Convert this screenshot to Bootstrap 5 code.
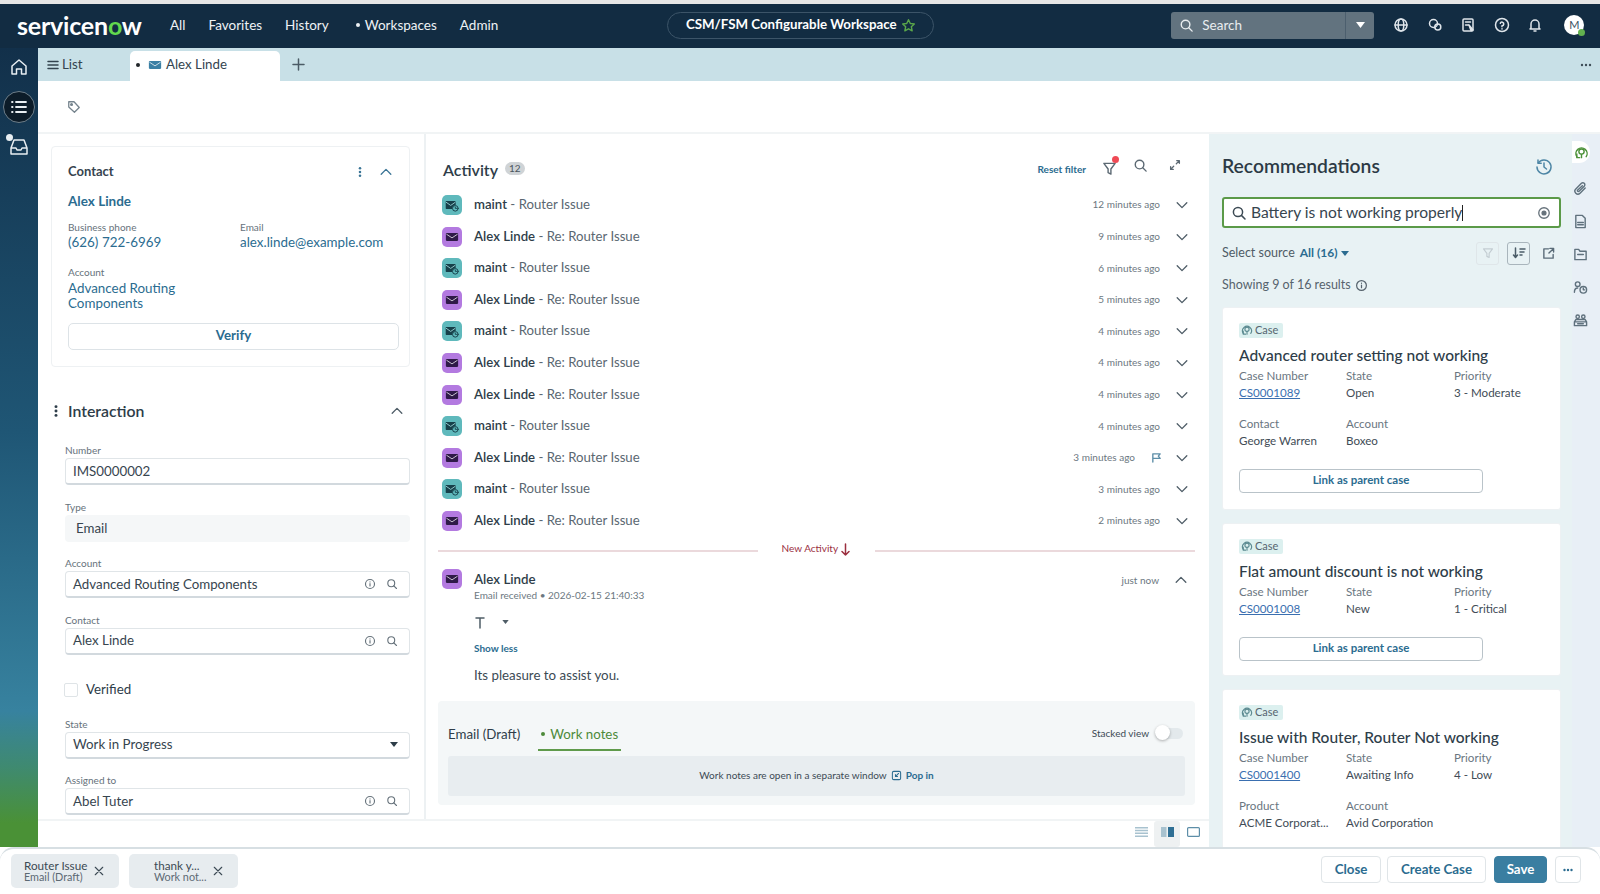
<!DOCTYPE html>
<html lang="en">
<head>
  <meta charset="UTF-8">
  <title>CSM/FSM Configurable Workspace</title>
  <link href="https://cdn.jsdelivr.net/npm/bootstrap@5.3.3/dist/css/bootstrap.min.css" rel="stylesheet">
  <style>
    html, body { height: 894px; overflow: hidden; }
    body { font-family: Lato, "Liberation Sans", sans-serif; font-size: 13.3px; color: #2e3d49; background: #fff; padding-top: 4px; border-top: 0; }
    .ic { fill: none; stroke: currentColor; stroke-width: 1.5; stroke-linecap: round; stroke-linejoin: round; flex: none; }
    .ic-fill { fill: currentColor; stroke: none; }
    a { color: #2b6c90; text-decoration: none; }

    /* top bar */
    .sn-strip { position: absolute; top: 0; left: 0; right: 0; height: 4px; background: #e6e6e6; }
    .sn-top { height: 44px; background: #122c42; color: #fff; padding-bottom: 2px; }
    .sn-logo { width: 124px; margin-left: 17px; font-size: 25px; font-weight: 700; line-height: 1; letter-spacing: -.2px; }
    .sn-logo span { color: #62d84e; }
    .sn-menu { margin-left: 29px; gap: 23px; font-size: 13.5px; color: #eef2f5; }
    .sn-dot { display: inline-block; width: 4px; height: 4px; border-radius: 50%; background: currentColor; margin-right: 5px; vertical-align: 3px; }
    .sn-ws { margin-left: 169px; width: 267px; height: 27px; border: 1px solid #3c5468; border-radius: 14px; font-size: 13.3px; font-weight: 700; }
    .sn-search { margin-left: 237px; width: 203px; height: 27px; background: #62737f; border-radius: 3px; font-size: 13.5px; color: #e9edf0; }
    .sn-search-drop { width: 29px; height: 27px; border-left: 1px solid #4c5f6e; }
    .sn-tools { margin-left: 19px; gap: 17.5px; color: #dfe5ea; }
    .sn-avatar { width: 20px; height: 20px; border-radius: 50%; background: #fff; color: #39505f; font-size: 11px; position: relative; margin-left: 21px; }
    .sn-avatar i { position: absolute; right: -1px; bottom: -1px; width: 7px; height: 7px; border-radius: 50%; background: #62b14f; }

    /* frame */
    .sn-body { height: 799px; }
    .sn-side { width: 38px; background: linear-gradient(180deg, #12304a 0%, #1f5675 48%, #37829f 83%, #3f8a70 90%, #4a9136 97%); color: #e8eef2; padding-top: 3px; gap: 8px; }
    .sn-side-btn { width: 32px; height: 32px; border-radius: 50%; }
    .sn-side-on { background: #0c1c29; border: 1px solid #6d7e8a; }
    .sn-inbox { position: relative; }
    .sn-inbox i { position: absolute; left: 3px; top: 3px; width: 7px; height: 7px; border-radius: 50%; background: #e8eef2; }
    .sn-tabs { height: 33px; background: #c8e0e7; }
    .sn-tab-list { width: 92px; padding-left: 9px; gap: 3px; color: #34444f; }
    .sn-tab-on { width: 150px; height: 30px; margin-top: 3px; padding: 0 0 3px 6px; background: #fff; border-radius: 5px 5px 0 0; gap: 4px; color: #34444f; }
    .sn-tagrow { height: 55px; padding-left: 29px; border-bottom: 2px solid #f1f4f5; color: #76848e; }

    /* left column */
    .sn-left { width: 388px; border-right: 2px solid #edf1f3; overflow: hidden; flex: none; }
    .sn-contact { margin: 12px 14px 0 13px; height: 221px; border: 1px solid #eef1f3; border-radius: 4px; padding: 15px 10px 0 16px; }
    .sn-contact-head { margin-right: 6px; }
    .sn-cardtitle { font-size: 13px; font-weight: 700; color: #36444f; }
    .sn-alex { font-size: 13.5px; font-weight: 700; margin-top: 9px; line-height: 20px; }
    .sn-contact-cols { margin-top: 10px; }
    .sn-lab { font-size: 10px; color: #66727b; line-height: 13px; }
    .sn-link-big { display: block; font-size: 13.4px; line-height: 17px; color: #2b6c90; }
    .sn-acct-lab { margin-top: 15px; }
    .sn-acct { width: 130px; line-height: 15.5px; margin-top: 2px; }
    .sn-verify { height: 27px; margin-top: 11px; font-size: 13.3px; font-weight: 700; color: #2b6c90; border: 1px solid #dde3e7; border-radius: 5px; }
    .sn-inter-head { margin: 33px 20px 0 14px; height: 22px; font-size: 15.8px; font-weight: 600; color: #2e3d49; }
    .sn-form { margin: 22px 14px 0 27px; }
    .sn-fld { margin-bottom: 15.5px; }
    .sn-fld .sn-lab { margin-bottom: 1px; }
    .sn-input { height: 27px; padding: 0 11px 0 7px; font-size: 13.3px; line-height: 25px; color: #37454f; border: 1px solid #e0e5e8; border-bottom: 2px solid #d2d9de; border-radius: 4px; }
    .sn-input-ro { background: #f5f7f8; border: 0; padding-left: 11px; line-height: 27px; }
    .sn-check { width: 14px; height: 14px; border: 1px solid #dfe4e7; border-radius: 2px; }
    .sn-verified { height: 24px; margin: 23px 0 16px -1px; }

    /* activity */
    .sn-mid { width: 783px; padding: 0 14px 0 12px; flex: none; overflow: hidden; }
    .sn-mid-head { height: 55px; padding: 24px 13px 0 5px; }
    .sn-act-title { font-size: 16px; font-weight: 600; color: #2e3d49; }
    .sn-count { background: #cfd3d6; color: #4b565e; font-size: 10px; line-height: 13px; border-radius: 7px; padding: 0 4px; margin-left: 7px; }
    .sn-row { height: 31.6px; font-size: 13.2px; }
    .sn-ava { width: 20px; height: 20px; border-radius: 5px; margin-left: 4px; margin-right: 12px; }
    .sn-ava-a { background: #5fb9bc; color: #16404a; }
    .sn-ava-b { background: #b37ae0; color: #2f1a48; }
    .sn-who { font-weight: 600; color: #2e3d49; }
    .sn-subj { color: #5a6771; }
    .sn-time { font-size: 10px; color: #6c7881; }
    .sn-chev { margin-left: 15px; margin-right: 6px; color: #4f5d67; }
    .sn-newline { height: 23px; color: #9b2f3f; font-size: 10px; }
    .sn-newline hr { flex: 1; margin: 6px 0 0; border: 0; border-top: 2px solid #ebd9dc; opacity: 1; }
    .sn-new-text { width: 117px; }
    .sn-msg { padding: 9px 7px 0 0; height: 141px; }
    .sn-msg-name { line-height: 1; padding-top: 4px; }
    .sn-msg-sub { margin-top: 2px; }
    .sn-msg-t { margin-top: 11px; height: 16px; }
    .sn-showless { display: block; font-size: 10px; font-weight: 700; margin-top: 11px; }
    .sn-msg-body { margin-top: 10px; color: #3c4a54; }
    .sn-composer { height: 104px; background: #f4f7f8; border-radius: 4px; padding: 0 10px; }
    .sn-comp-tabs { height: 53px; padding-top: 21px; }
    .sn-comp-tab { height: 29px; line-height: 24px; }
    .sn-comp-on { margin-left: 18px; width: 83px; color: #4c8a3a; border-bottom: 2px solid #5f9a4b; text-align: center; }
    .sn-switch { width: 28px; height: 11px; border-radius: 6px; background: #e3e9ec; position: relative; margin-left: 6px; margin-right: 2px; }
    .sn-switch i { position: absolute; left: 0; top: -3px; width: 15px; height: 15px; border-radius: 50%; background: #fff; box-shadow: 0 1px 3px rgba(0,0,0,.3); }
    .sn-stacked { height: 24px; color: #3c4a54; }
    .sn-popped { height: 40px; margin-top: 2px; background: #e8edf0; border-radius: 3px; font-size: 10px; color: #3c4a54; gap: 4px; }
    .sn-foot { height: 28px; border-top: 2px solid #f1f4f5; padding-right: 3px; color: #5d8ea8; }
    .sn-foot span { width: 26px; height: 26px; padding-bottom: 4px; }
    .sn-foot-on { background: #eef1f2; border-radius: 3px; }

    /* recommendations */
    .sn-rec { width: 363px; background: #e8f2f4; padding: 0 11px 0 13px; overflow: hidden; flex: none; }
    .sn-rec-title { height: 63px; padding-top: 18px; font-size: 19.3px; font-weight: 600; color: #2c3a45; }
    .sn-hist { margin-top: 6px; margin-right: 8px; color: #4d86a5; }
    .sn-rec-search { height: 31px; background: #fff; border: 2px solid #5b9a48; border-radius: 3px; font-size: 15.6px; color: #37454f; padding: 0 8px 0 7px; gap: 4px; }
    .sn-caret { display: inline-block; width: 1px; height: 16px; background: #222; vertical-align: -3px; }
    .sn-src { height: 38px; font-size: 12.5px; color: #4f5c66; margin-top: 6px; }
    .sn-tool { width: 23px; height: 23px; border: 1px solid #dfe6e9; border-radius: 3px; color: #c3cdd2; }
    .sn-tool-on { border: 1.5px solid #a9b5bc; color: #4b5d68; margin-left: 8px; margin-right: 12px; }
    .sn-export { margin-right: 6px; color: #5a6c78; }
    .sn-showing { font-size: 12.5px; color: #56636d; height: 26px; gap: 4px; margin-bottom: 9px; }
    .sn-rcard { background: #fff; border: 1px solid #edf1f3; border-radius: 3px; padding: 10.5px 16px 0; margin-bottom: 13px; }
    .sn-casetag { width: 44px; height: 15px; background: #dcf0ef; color: #566570; font-size: 11px; border-radius: 2px; gap: 2px; padding-left: 2px; }
    .sn-rtitle { font-size: 15.5px; line-height: 20px; font-weight: 500; color: #2e3d49; margin-top: 7.5px; }
    .sn-grid { display: grid; grid-template-columns: 107px 108px 1fr; font-size: 11.6px; line-height: 17px; color: #3f4c56; margin-top: 2px; }
    .sn-grid small { display: block; font-size: 11.6px; color: #6a767f; }
    .sn-grid a { color: #3a6fb0; text-decoration: underline; }
    .sn-gap { margin-top: 14px; }
    .sn-linkbtn { width: 244px; height: 24px; margin-top: 19.5px; line-height: 20px; border: 1.5px solid #b9c3c9; border-radius: 4px; font-size: 11.5px; font-weight: 700; color: #2b6c90; text-align: center; }
    .sn-rail { width: 28px; background: #e8eff6; padding: 7px 0 0 0; gap: 15px; color: #5f717d; flex: none; }
    .sn-rail-on { width: 18px; height: 22px; border-radius: 0 11px 11px 0; background: #fff; color: #4b9138; }
    .sn-rail-item { height: 18px; padding-left: 1px; }

    /* bottom bar */
    .sn-bottom { height: 47px; border-top: 2px solid #d7dfe3; border-radius: 14px 14px 0 0; padding: 5px 19px 0 11px; }
    .sn-pill { height: 34px; background: #e7ecef; border-radius: 5px; line-height: 12px; font-size: 11.7px; color: #3c4a54; padding: 0 14px 0 13px; gap: 6px; white-space: nowrap; }
    .sn-pill small { display: block; font-size: 10.8px; color: #5c6973; }
    .sn-pill-b { width: 109px; margin-left: 10px; padding-left: 15px; }
    .sn-bbtn { height: 27px; margin-top: 2px; font-size: 13.3px; font-weight: 700; line-height: 25px; color: #2b6c90; border: 1px solid #e0e5e8; border-radius: 4px; background: #fff; text-align: center; }
    .sn-bsave { background: #3a7ea1; color: #fff; border-color: #3a7ea1; }
  </style>
</head>
<body>
<div class="sn-strip"></div>

<svg width="0" height="0" class="position-absolute">
  <symbol id="i-search" viewBox="0 0 16 16"><circle cx="7" cy="7" r="4.6"/><path d="M10.4 10.4 14 14"/></symbol>
  <symbol id="i-info" viewBox="0 0 16 16"><circle cx="8" cy="8" r="6"/><path d="M8 7.5v3.2M8 5.2v.1"/></symbol>
  <symbol id="i-down" viewBox="0 0 16 16"><path d="M2.5 5.5 8 11l5.5-5.5"/></symbol>
  <symbol id="i-up" viewBox="0 0 16 16"><path d="M2.5 10.5 8 5l5.5 5.5"/></symbol>
  <symbol id="i-x" viewBox="0 0 16 16"><path d="M3 3l10 10M13 3 3 13"/></symbol>
  <symbol id="i-mail" viewBox="0 0 16 16"><path d="M2 3.5h12c.5 0 1 .5 1 1v7c0 .5-.5 1-1 1H2c-.5 0-1-.5-1-1v-7c0-.5.5-1 1-1z" fill="currentColor" stroke="none"/><path d="M2 5l6 4 6-4" stroke="#fff" stroke-width="1.1" opacity=".75"/></symbol>
  <symbol id="i-mailclock" viewBox="0 0 16 16"><path d="M1.500 3.500h10c.4 0 .7.3.7.7V8a4 4 0 0 0-4 4.500H1.500c-.4 0-.7-.3-.7-.7V4.200c0-.4.3-.7.700-.7z" fill="currentColor" stroke="none"/><path d="M1.500 5l5 3.500 5-3.500" stroke="#9fd8da" stroke-width="1"/><circle cx="11.800" cy="11.800" r="3.200" stroke-width="1.100"/><path d="M11.800 10.200v1.700h1.400" stroke-width="1"/></symbol>
  <symbol id="i-filter" viewBox="0 0 16 16"><path d="M2 2.500h12L9.500 8.500V14l-3-1.500v-4z"/></symbol>
  <symbol id="i-dots" viewBox="0 0 16 16"><circle cx="8" cy="3" r="1.700" fill="currentColor" stroke="none"/><circle cx="8" cy="8" r="1.700" fill="currentColor" stroke="none"/><circle cx="8" cy="13" r="1.700" fill="currentColor" stroke="none"/></symbol>
  <symbol id="i-case" viewBox="0 0 16 16"><path d="M3 12.500A6 6 0 1 1 13 12.500"/><circle cx="8" cy="7" r="2.800"/><path d="M3 9.500v4h3M8 10v3.500"/></symbol>
</svg>

<!-- top bar -->
<div class="sn-top d-flex align-items-center">
  <div class="sn-logo">servicen<span>o</span>w</div>
  <div class="sn-menu d-flex">
    <span>All</span><span>Favorites</span><span>History</span>
    <span class="ms-1"><i class="sn-dot"></i>Workspaces</span><span>Admin</span>
  </div>
  <div class="sn-ws d-flex align-items-center justify-content-center gap-1">
    CSM/FSM Configurable Workspace
    <svg class="ic" width="15" height="15" viewBox="0 0 16 16" style="color:#5aa64a"><path d="M8 1.800l1.900 4 4.300.5-3.200 3 .9 4.400L8 11.500l-3.900 2.200.9-4.400-3.200-3 4.300-.5z"/></svg>
  </div>
  <div class="sn-search d-flex align-items-center">
    <svg class="ic ms-2 me-1" width="15" height="15"><use href="#i-search"/></svg>
    <span class="flex-grow-1 ms-1">Search</span>
    <span class="sn-search-drop d-flex align-items-center justify-content-center"><svg width="9" height="6" viewBox="0 0 9 6"><path d="M0 0h9L4.500 6z" fill="#fff"/></svg></span>
  </div>
  <div class="sn-tools d-flex align-items-center">
    <svg class="ic" width="16" height="16" viewBox="0 0 16 16" stroke-width="1.100"><circle cx="8" cy="8" r="6"/><ellipse cx="8" cy="8" rx="2.800" ry="6"/><path d="M2 8h12"/></svg>
    <svg class="ic" width="16" height="16" viewBox="0 0 16 16"><circle cx="6.500" cy="6.500" r="4"/><circle cx="10.800" cy="10" r="3"/></svg>
    <svg class="ic" width="16" height="16" viewBox="0 0 16 16"><rect x="3" y="2" width="10" height="12" rx="1"/><path d="M5.500 5h5M5.500 8h3"/><path d="M9 8l4 5-2 .5z" fill="currentColor"/></svg>
    <svg class="ic" width="16" height="16" viewBox="0 0 16 16"><circle cx="8" cy="8" r="6.500"/><path d="M6.300 6.300A1.800 1.800 0 1 1 8 8.700v1M8 11.800v.1"/></svg>
    <svg class="ic" width="16" height="16" viewBox="0 0 16 16"><path d="M4 11V7a4 4 0 0 1 8 0v4l1 1H3zM7 14h2"/></svg>
  </div>
  <div class="sn-avatar d-flex align-items-center justify-content-center">M<i></i></div>
</div>

<div class="sn-body d-flex">
  <!-- left nav -->
  <div class="sn-side d-flex flex-column align-items-center">
    <span class="sn-side-btn d-flex align-items-center justify-content-center">
      <svg class="ic" width="20" height="20" viewBox="0 0 20 20"><path d="M3 9l7-6 7 6v8h-4.500v-5h-5v5H3z"/></svg>
    </span>
    <span class="sn-side-btn sn-side-on d-flex align-items-center justify-content-center">
      <svg class="ic" width="18" height="18" viewBox="0 0 18 18"><path d="M6 4h10M6 9h10M6 14h10M2 4h.6M2 9h.6M2 14h.6" stroke-width="1.800"/></svg>
    </span>
    <span class="sn-side-btn sn-inbox d-flex align-items-center justify-content-center">
      <i></i>
      <svg class="ic" width="20" height="20" viewBox="0 0 20 20"><path d="M5 3h10l3 8v6H2v-6zM2 11h5l1 2h4l1-2h5"/></svg>
    </span>
  </div>

  <div class="flex-grow-1 d-flex flex-column" style="min-width:0">
    <!-- tabs -->
    <div class="sn-tabs d-flex">
      <div class="sn-tab-list d-flex align-items-center">
        <svg class="ic" width="12" height="12" viewBox="0 0 12 12" stroke-width="1"><path d="M1 2.500h10M1 6h10M1 9.500h10"/></svg>List
      </div>
      <div class="sn-tab-on d-flex align-items-center">
        <i class="sn-dot m-0 me-1 text-dark" style="vertical-align:0"></i>
        <svg class="ic" width="14" height="14" style="color:#3b80a5"><use href="#i-mail"/></svg>Alex Linde
      </div>
      <div class="d-flex align-items-center ms-2 ps-1" style="color:#4b5b66">
        <svg class="ic" width="13" height="13" viewBox="0 0 13 13" stroke-width="1.200"><path d="M6.500 1v11M1 6.500h11"/></svg>
      </div>
      <div class="ms-auto d-flex align-items-center pe-2" style="color:#3e4d58">
        <svg width="12" height="4" viewBox="0 0 12 4"><circle cx="2" cy="2" r="1.200" fill="currentColor"/><circle cx="6" cy="2" r="1.200" fill="currentColor"/><circle cx="10" cy="2" r="1.200" fill="currentColor"/></svg>
      </div>
    </div>
    <!-- tags -->
    <div class="sn-tagrow d-flex align-items-center">
      <svg class="ic" width="14" height="14" viewBox="0 0 16 16"><path d="M2 2h6l6 6.500-5.500 5.500L2 8z"/><circle cx="5.200" cy="5.200" r="1" fill="currentColor"/></svg>
    </div>

    <div class="flex-grow-1 d-flex" style="min-height:0">
      <div class="d-flex flex-column" style="width:1171px">
        <div class="flex-grow-1 d-flex" style="min-height:0">
          <!-- form column -->
          <div class="sn-left">
            <div class="sn-contact">
              <div class="sn-contact-head d-flex align-items-center">
                <span class="sn-cardtitle flex-grow-1">Contact</span>
                <svg class="ic" width="12" height="12" style="color:#3b7596"><use href="#i-dots"/></svg>
                <svg class="ic" width="14" height="14" style="color:#3b7596;margin-left:13px"><use href="#i-up"/></svg>
              </div>
              <a href="#" class="d-block sn-alex">Alex Linde</a>
              <div class="sn-contact-cols d-flex">
                <div style="width:172px"><div class="sn-lab">Business phone</div><a href="#" class="sn-link-big">(626) 722-6969</a></div>
                <div><div class="sn-lab">Email</div><a href="#" class="sn-link-big">alex.linde@example.com</a></div>
              </div>
              <div class="sn-lab sn-acct-lab">Account</div>
              <a href="#" class="sn-link-big sn-acct">Advanced Routing Components</a>
              <div class="sn-verify d-flex align-items-center justify-content-center">Verify</div>
            </div>

            <div class="sn-inter-head d-flex align-items-center">
              <svg class="ic" width="8" height="14" viewBox="4 0 8 16" style="color:#2e3d49"><use href="#i-dots" width="16" height="16" x="0"/></svg>
              <span class="flex-grow-1" style="margin-left:8px">Interaction</span>
              <svg class="ic" width="14" height="14" style="color:#4f5d67"><use href="#i-up"/></svg>
            </div>

            <div class="sn-form">
              <div class="sn-fld"><div class="sn-lab">Number</div><div class="sn-input">IMS0000002</div></div>
              <div class="sn-fld"><div class="sn-lab">Type</div><div class="sn-input sn-input-ro">Email</div></div>
              <div class="sn-fld"><div class="sn-lab">Account</div><div class="sn-input d-flex align-items-center"><span class="flex-grow-1">Advanced Routing Components</span><svg class="ic me-2" width="12" height="12" viewBox="0 0 16 16" style="color:#66727b"><use href="#i-info"/></svg><svg class="ic" width="12" height="12" viewBox="0 0 16 16" style="color:#66727b;margin-left:2px"><use href="#i-search"/></svg></div></div>
              <div class="sn-fld"><div class="sn-lab">Contact</div><div class="sn-input d-flex align-items-center"><span class="flex-grow-1">Alex Linde</span><svg class="ic me-2" width="12" height="12" viewBox="0 0 16 16" style="color:#66727b"><use href="#i-info"/></svg><svg class="ic" width="12" height="12" viewBox="0 0 16 16" style="color:#66727b;margin-left:2px"><use href="#i-search"/></svg></div></div>
              <div class="sn-verified d-flex align-items-center gap-2"><span class="sn-check"></span><span>Verified</span></div>
              <div class="sn-fld"><div class="sn-lab">State</div><div class="sn-input d-flex align-items-center"><span class="flex-grow-1">Work in Progress</span><svg width="8" height="5" viewBox="0 0 8 5"><path d="M0 0h8L4 5z" fill="#2e3d49"/></svg></div></div>
              <div class="sn-fld"><div class="sn-lab">Assigned to</div><div class="sn-input d-flex align-items-center"><span class="flex-grow-1">Abel Tuter</span><svg class="ic me-2" width="12" height="12" viewBox="0 0 16 16" style="color:#66727b"><use href="#i-info"/></svg><svg class="ic" width="12" height="12" viewBox="0 0 16 16" style="color:#66727b;margin-left:2px"><use href="#i-search"/></svg></div></div>
            </div>
          </div>

          <!-- activity column -->
          <div class="sn-mid">
            <div class="sn-mid-head d-flex align-items-start">
              <span class="sn-act-title">Activity</span><span class="sn-count mt-1">12</span>
              <a href="#" class="ms-auto fw-bold mt-1" style="font-size:10px">Reset filter</a>
              <span class="position-relative ms-3" style="color:#5c6973">
                <svg class="ic" width="15" height="15"><use href="#i-filter"/></svg>
                <i class="position-absolute rounded-circle" style="left:10px;top:-2px;width:7px;height:7px;background:#ef4a55"></i>
              </span>
              <svg class="ic ms-3" width="15" height="15" style="color:#5c6973"><use href="#i-search"/></svg>
              <svg class="ic ms-3 ps-1" width="18" height="14" viewBox="0 0 16 16" style="color:#5c6973"><path d="M3 13l3.500-3.500M3 13h3M3 13v-3M13 3 9.500 6.500M13 3h-3M13 3v3"/></svg>
            </div>

            <div id="activityRows"></div>

            <div class="sn-newline d-flex align-items-center text-center">
              <hr><span class="sn-new-text">New Activity <svg class="ic" width="11" height="13" viewBox="0 0 11 13"><path d="M5.500 1v11M2 8.500l3.500 3.500L9 8.500"/></svg></span><hr>
            </div>

            <div class="sn-msg d-flex">
              <span class="sn-ava sn-ava-b d-flex align-items-center justify-content-center"><svg class="ic" width="14" height="14"><use href="#i-mail"/></svg></span>
              <div class="flex-grow-1">
                <div class="sn-who sn-msg-name">Alex Linde</div>
                <div class="sn-time sn-msg-sub">Email received &bull; 2026-02-15 21:40:33</div>
                <div class="sn-msg-t d-flex align-items-center">
                  <svg class="ic" width="12" height="13" viewBox="0 0 12 13" stroke-width="1.100" style="color:#4f5d67"><path d="M2 2h8M6 2v10"/></svg>
                  <svg class="ms-3" width="7" height="4" viewBox="0 0 8 5"><path d="M0 0h8L4 5z" fill="#4f5d67"/></svg>
                </div>
                <a href="#" class="sn-showless">Show less</a>
                <div class="sn-msg-body">Its pleasure to assist you.</div>
              </div>
              <div class="d-flex align-items-start pt-1">
                <span class="sn-time">just now</span>
                <svg class="ic sn-chev me-0" width="14" height="14"><use href="#i-up"/></svg>
              </div>
            </div>

            <div class="sn-composer">
              <div class="sn-comp-tabs d-flex align-items-start">
                <span class="sn-comp-tab">Email (Draft)</span>
                <span class="sn-comp-tab sn-comp-on"><i class="sn-dot"></i>Work notes</span>
                <span class="sn-stacked ms-auto d-flex align-items-center sn-time">Stacked view<span class="sn-switch"><i></i></span></span>
              </div>
              <div class="sn-popped d-flex align-items-center justify-content-center">
                Work notes are open in a separate window
                <svg class="ic" width="11" height="11" viewBox="0 0 16 16" style="color:#2b6c90"><rect x="2" y="2" width="12" height="12" rx="2"/><path d="M11 5 6.500 9.500M6.500 6.500v3h3"/></svg>
                <a href="#" class="fw-bold">Pop in</a>
              </div>
            </div>
          </div>
        </div>
        <!-- view switcher -->
        <div class="sn-foot d-flex justify-content-end">
          <span class="d-flex align-items-center justify-content-center"><svg width="13" height="10" viewBox="0 0 13 10" fill="#a8c2cf"><path d="M0 0h13v1.500H0zM0 2.800h13v1.500H0zM0 5.600h13v1.500H0zM0 8.400h13V10H0z"/></svg></span>
          <span class="sn-foot-on d-flex align-items-center justify-content-center"><svg width="13" height="10" viewBox="0 0 13 10"><path d="M0 0h5.500v10H0z" fill="#a8c2cf"/><path d="M7 0h6v10H7z" fill="#2f6f94"/></svg></span>
          <span class="d-flex align-items-center justify-content-center"><svg width="13" height="10" viewBox="0 0 13 10"><rect x=".6" y=".6" width="11.800" height="8.800" rx="1" fill="none" stroke="#5d8ea8" stroke-width="1.200"/></svg></span>
        </div>
      </div>

      <!-- recommendations -->
      <div class="sn-rec">
        <div class="sn-rec-title d-flex justify-content-between align-items-start">
          Recommendations
          <svg class="ic sn-hist" width="18" height="18" viewBox="0 0 18 18"><path d="M3.200 5A7 7 0 1 1 2 9"/><path d="M3 2v3.200h3.200M9 5v4l2.500 2"/></svg>
        </div>
        <div class="sn-rec-search d-flex align-items-center">
          <svg class="ic" width="16" height="16" style="color:#3c4a54"><use href="#i-search"/></svg>
          <span class="flex-grow-1">Battery is not working properly<i class="sn-caret"></i></span>
          <svg class="ic" width="14" height="14" viewBox="0 0 16 16" style="color:#66727b"><circle cx="8" cy="8" r="6"/><circle cx="8" cy="8" r="2.200" fill="currentColor"/></svg>
        </div>
        <div class="sn-src d-flex align-items-center">
          <span>Select source</span>
          <a href="#" class="fw-bold" style="font-size:12px;margin-left:5px">All (16)</a>
          <svg class="ms-1" width="8" height="5" viewBox="0 0 8 5"><path d="M0 0h8L4 5z" fill="#2b6c90"/></svg>
          <span class="sn-tool ms-auto d-flex align-items-center justify-content-center"><svg class="ic" width="12" height="12"><use href="#i-filter"/></svg></span>
          <span class="sn-tool sn-tool-on d-flex align-items-center justify-content-center"><svg class="ic" width="14" height="14" viewBox="0 0 14 14" stroke-width="1.100"><path d="M3.500 2v9M1.500 9l2 2.500L5.500 9M8 3h5M8 6h4M8 9h2"/></svg></span>
          <svg class="ic sn-export" width="13" height="13" viewBox="0 0 14 14" stroke-width="1.100"><path d="M7 2H2v10h10V8M8.500 1.500h4v4M12.500 1.500 7.500 6.500"/></svg>
        </div>
        <div class="sn-showing d-flex align-items-center">
          Showing 9 of 16 results
          <svg class="ic" width="13" height="13" viewBox="0 0 16 16"><use href="#i-info"/></svg>
        </div>

        <div class="sn-rcard" style="height:203px">
          <div class="sn-casetag d-flex align-items-center mt-1"><svg class="ic" width="12" height="12" style="color:#5b8a90"><use href="#i-case"/></svg>Case</div>
          <div class="sn-rtitle">Advanced router setting not working</div>
          <div class="sn-grid">
            <div><small>Case Number</small><a href="#">CS0001089</a></div>
            <div><small>State</small>Open</div>
            <div><small>Priority</small>3 - Moderate</div>
          </div>
          <div class="sn-grid sn-gap">
            <div><small>Contact</small>George Warren</div>
            <div><small>Account</small>Boxeo</div>
          </div>
          <div class="sn-linkbtn">Link as parent case</div>
        </div>

        <div class="sn-rcard" style="height:153px">
          <div class="sn-casetag d-flex align-items-center mt-1"><svg class="ic" width="12" height="12" style="color:#5b8a90"><use href="#i-case"/></svg>Case</div>
          <div class="sn-rtitle">Flat amount discount is not working</div>
          <div class="sn-grid">
            <div><small>Case Number</small><a href="#">CS0001008</a></div>
            <div><small>State</small>New</div>
            <div><small>Priority</small>1 - Critical</div>
          </div>
          <div class="sn-linkbtn">Link as parent case</div>
        </div>

        <div class="sn-rcard" style="height:170px">
          <div class="sn-casetag d-flex align-items-center mt-1"><svg class="ic" width="12" height="12" style="color:#5b8a90"><use href="#i-case"/></svg>Case</div>
          <div class="sn-rtitle">Issue with Router, Router Not working</div>
          <div class="sn-grid">
            <div><small>Case Number</small><a href="#">CS0001400</a></div>
            <div><small>State</small>Awaiting Info</div>
            <div><small>Priority</small>4 - Low</div>
          </div>
          <div class="sn-grid sn-gap">
            <div><small>Product</small>ACME Corporat...</div>
            <div><small>Account</small>Avid Corporation</div>
          </div>
        </div>
      </div>

      <!-- right rail -->
      <div class="sn-rail d-flex flex-column align-items-start">
        <span class="sn-rail-on d-flex align-items-center justify-content-center"><svg class="ic" width="15" height="15"><use href="#i-case"/></svg></span>
        <span class="sn-rail-item"><svg class="ic" width="15" height="15" viewBox="0 0 16 16"><path d="M13 7.500 7.500 13a3 3 0 0 1-4.500-4.500L9 2.500a2 2 0 0 1 3 3L6.500 11a1 1 0 0 1-1.500-1.500L10 5"/></svg></span>
        <span class="sn-rail-item"><svg class="ic" width="15" height="15" viewBox="0 0 16 16"><path d="M3 1.500h7l3 3v10H3zM5 9h6M5 11.500h6"/></svg></span>
        <span class="sn-rail-item"><svg class="ic" width="15" height="15" viewBox="0 0 16 16"><path d="M2 2.500h4l1.500 2H14v9H2zM5 8h6"/></svg></span>
        <span class="sn-rail-item"><svg class="ic" width="15" height="15" viewBox="0 0 16 16"><circle cx="5" cy="4.500" r="2.500"/><path d="M1.500 13c0-3 1.500-4.500 3.500-4.500"/><circle cx="11" cy="10.500" r="3.500"/><path d="M11 8.500v2h1.500"/></svg></span>
        <span class="sn-rail-item"><svg class="ic" width="15" height="15" viewBox="0 0 16 16"><circle cx="5" cy="4" r="1.800"/><circle cx="11" cy="4" r="1.800"/><path d="M1.500 9.500h13v4h-13zM1.500 9.500 3 7h10l1.500 2.500M5 11.500h6"/></svg></span>
      </div>
    </div>
  </div>
</div>

<!-- bottom bar -->
<div class="sn-bottom d-flex">
  <div class="sn-pill d-flex align-items-center" style="width:108px">
    <div class="flex-grow-1">Router Issue<small>Email (Draft)</small></div>
    <svg class="ic" width="12" height="12" stroke-width="1.200"><use href="#i-x"/></svg>
  </div>
  <div class="sn-pill sn-pill-b d-flex align-items-center">
    <i class="sn-dot m-0 text-dark"></i>
    <div class="flex-grow-1 ps-1">thank y...<small>Work not...</small></div>
    <svg class="ic" width="12" height="12" stroke-width="1.200"><use href="#i-x"/></svg>
  </div>
  <div class="ms-auto d-flex" style="align-self:flex-start">
    <div class="sn-bbtn" style="width:60px">Close</div>
    <div class="sn-bbtn ms-2" style="width:99px;margin-left:6px!important">Create Case</div>
    <div class="sn-bbtn sn-bsave ms-2" style="width:53px">Save</div>
    <div class="sn-bbtn ms-2 d-flex align-items-center justify-content-center" style="width:26px"><svg width="10" height="4" viewBox="0 0 10 4"><circle cx="1.500" cy="2" r="1.200" fill="currentColor"/><circle cx="5" cy="2" r="1.200" fill="currentColor"/><circle cx="8.500" cy="2" r="1.200" fill="currentColor"/></svg></div>
  </div>
</div>

<script>
  // activity rows, oldest first
  const rows = [
    ["a", "12 minutes ago"], ["b", "9 minutes ago"], ["a", "6 minutes ago"], ["b", "5 minutes ago"],
    ["a", "4 minutes ago"], ["b", "4 minutes ago"], ["b", "4 minutes ago"], ["a", "4 minutes ago"],
    ["b", "3 minutes ago", true], ["a", "3 minutes ago"], ["b", "2 minutes ago"]
  ];
  document.getElementById("activityRows").innerHTML = rows.map(([kind, time, flag]) => `
    <div class="sn-row d-flex align-items-center">
      <span class="sn-ava sn-ava-${kind} d-flex align-items-center justify-content-center">
        <svg class="ic" width="14" height="14"><use href="#i-${kind === "a" ? "mailclock" : "mail"}"/></svg>
      </span>
      <span class="flex-grow-1"><span class="sn-who">${kind === "a" ? "maint" : "Alex Linde"}</span>
      <span class="sn-subj">- ${kind === "a" ? "Router Issue" : "Re: Router Issue"}</span></span>
      <span class="sn-time">${time}</span>
      ${flag ? '<svg class="ic ms-3" width="11" height="11" viewBox="0 0 12 12" stroke-width="1" style="color:#5d8ea8"><path d="M2 11V2h8L8 4.500 10 7H2"/></svg>' : ""}
      <svg class="ic sn-chev" width="14" height="14" style="${flag ? "margin-left:13px" : ""}"><use href="#i-down"/></svg>
    </div>`).join("");
</script>
</body>
</html>
